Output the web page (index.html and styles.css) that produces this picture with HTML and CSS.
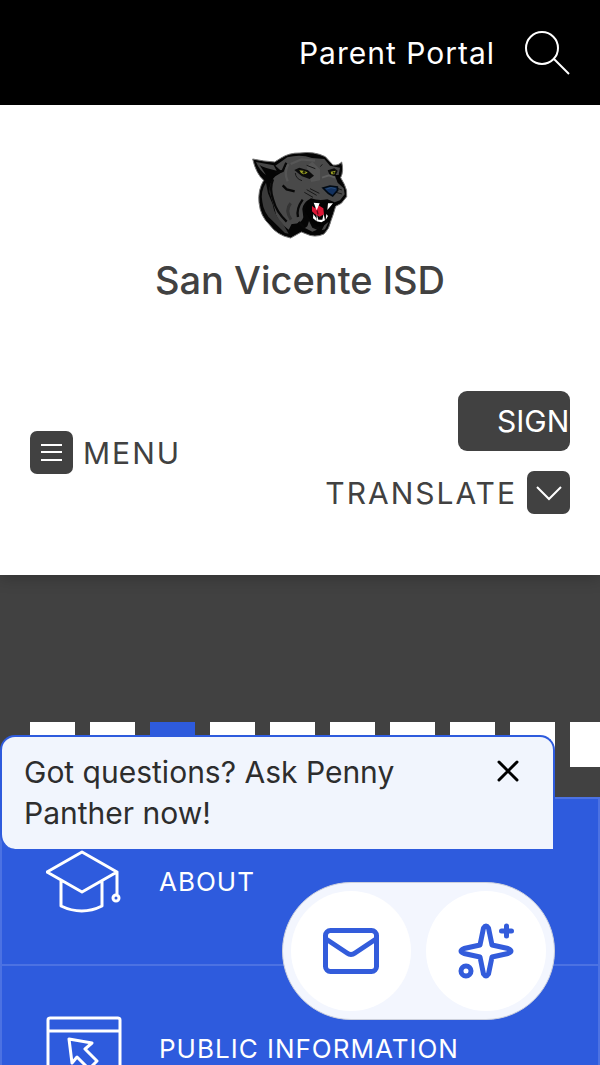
FILE: index.html
```html
<!DOCTYPE html>
<html lang="en">
<head>
<meta charset="utf-8">
<meta name="viewport" content="width=device-width, initial-scale=1">
<title>San Vicente ISD</title>
<link rel="stylesheet" href="styles.css">
</head>
<body>
<div class="page">
  <nav class="topbar" aria-label="Quick links">
    <a class="portal" href="#portal">Parent Portal</a>
    <button class="plain search" type="button" aria-label="Search">
      <svg width="45" height="44" viewBox="0 0 45 44" fill="none" stroke="#fff" stroke-width="2"><circle cx="17" cy="17" r="16"/><path d="m29 28 15 15"/></svg>
    </button>
  </nav>

  <header class="header">
    <a class="brand" href="#home">
      <svg class="logo" viewBox="36 30 288 270" aria-hidden="true">
        <path d="M38 57Q70 64 104 66L123 54Q148 38 180 39Q221 33 256 50L279 75Q296 77 305 66Q312 93 302 113L313 133Q323 152 320 170L304 190 287 199Q280 224 273 242Q268 267 252 282Q224 295 197 281L184 276 152 294Q111 286 89 255Q61 229 57 188Q53 151 71 121Q48 101 38 57Z" fill="#050505" stroke="#777" stroke-width="3"/>
        <path d="M48 66 101 76 110 92 79 84Q65 79 59 75L78 105Q59 92 48 66Z" fill="#464646"/>
        <path d="M106 77 142 52Q182 42 216 54L253 57 270 77 300 83 296 105 284 105 293 128 311 145 314 163 300 181 284 187 262 178Q235 183 213 175Q189 188 187 207L190 232Q185 253 155 252L146 269Q108 243 104 207L89 157Q87 126 106 109L127 96Z" fill="#494949"/>
        <path d="M78 128Q61 153 67 185Q71 219 96 241L135 279 146 281 129 252Q103 226 98 193L84 160Z" fill="#3a3a3a"/>
        <path d="M99 118Q87 146 100 181 109 216 140 245M106 98 128 93 139 68M128 136 140 148 164 154M188 179Q168 207 174 231M176 246 194 264 237 264" fill="none" stroke="#080808" stroke-width="7"/>
        <path d="M152 190Q134 211 153 239" fill="none" stroke="#343434" stroke-width="9"/>
        <path d="M145 72Q131 98 143 124M152 72 184 58 225 62" fill="none" stroke="#565656" stroke-width="7"/>
        <path d="M200 78 217 65 240 88 240 121 214 126 207 109Z" fill="#555"/>
        <path d="M163 90 178 83 204 91 222 107 209 117 186 109Z" fill="#0b0b0b"/>
        <path d="M178 91Q190 91 203 97 199 103 190 103 182 101 178 91Z" fill="#9ba026"/><circle cx="192" cy="97" r="4" fill="#202408"/>
        <path d="M263 91 283 85 293 92 286 108 270 107Z" fill="#0b0b0b"/>
        <path d="M272 95 287 92 283 103 274 103Z" fill="#9ba026"/><circle cx="281" cy="98" r="3" fill="#202408"/>
        <path d="M166 99Q167 116 186 122M200 76 226 86M241 80 247 73M200 149 230 166M193 157 219 172M210 146 238 160M292 145 306 150M288 157 306 162" fill="none" stroke="#181818" stroke-width="3"/>
        <path d="M246 113 267 106 285 113" fill="none" stroke="#606060" stroke-width="6"/>
        <path d="M249 144 270 138 292 141 293 151 278 168 265 160Z" fill="#12315f" stroke="#020a13" stroke-width="5"/>
        <path d="m259 147 14-4 14 3" fill="none" stroke="#365b84" stroke-width="2"/>
        <path d="M203 184Q229 191 252 185L276 187 284 191 269 231 263 251Q244 264 221 252L195 215Z" fill="#030303"/>
        <path d="M216 198 225 205 234 195 250 205 252 223 239 230 225 223 216 214Z" fill="#dd1736"/>
        <path d="M231 211 234 223" fill="none" stroke="#650719" stroke-width="4"/>
        <path d="M221 188 239 190 230 211ZM264 190 279 190 262 210ZM220 222 229 235 229 243 219 235ZM230 223 235 239 247 239 251 222 255 241 244 247 230 244ZM259 222 264 228 257 240Z" fill="#fff"/>
        <path d="M207 243 217 263 231 269 217 275 195 264 202 259ZM266 245 255 268 245 271 253 256Z" fill="#494949"/>
      </svg>
      <span class="brand-name">San Vicente ISD</span>
    </a>
    <div class="controls">
      <button class="plain control" type="button">
        <span class="tile-icon"><svg width="21" height="19" viewBox="0 0 21 19" stroke="#fff" stroke-width="2"><path d="M0 2h21M0 9h21M0 17h21"/></svg></span>
        <span>MENU</span>
      </button>
      <div class="account">
        <button class="signin" type="button">SIGN</button>
        <button class="plain control" type="button">
          <span>TRANSLATE</span>
          <span class="tile-icon"><svg width="26" height="16" viewBox="0 0 26 16" fill="none" stroke="#fff" stroke-width="2"><path d="m1 2 12 12L25 2"/></svg></span>
        </button>
      </div>
    </div>
  </header>

  <main>
    <section class="hero" aria-label="Gallery">
      <div class="slides">
        <button class="slide" type="button" aria-label="Slide 1"></button>
        <button class="slide" type="button" aria-label="Slide 2"></button>
        <button class="slide current" type="button" aria-label="Slide 3"></button>
        <button class="slide" type="button" aria-label="Slide 4"></button>
        <button class="slide" type="button" aria-label="Slide 5"></button>
        <button class="slide" type="button" aria-label="Slide 6"></button>
        <button class="slide" type="button" aria-label="Slide 7"></button>
        <button class="slide" type="button" aria-label="Slide 8"></button>
        <button class="slide" type="button" aria-label="Slide 9"></button>
        <button class="slide" type="button" aria-label="Slide 10"></button>
      </div>
    </section>
    <nav class="links" aria-label="Site sections">
      <a class="link" href="#about">
        <svg width="76" height="76" viewBox="0 0 76 76" fill="none" stroke="#fff" stroke-width="3" stroke-linejoin="round"><path d="M36 8 71 28 36 48 1 28ZM15 37V62Q36 72 56 62V37M71 28V50"/><circle cx="70" cy="54" r="3"/></svg>
        <span>ABOUT</span>
      </a>
      <a class="link" href="#public-information">
        <svg width="76" height="76" viewBox="0 0 76 76" fill="none" stroke="#fff" stroke-width="3" stroke-linejoin="round"><rect x="2" y="7" width="72" height="62" rx="2"/><path d="M2 20h72M23 28 46 32 39 38 51 50 43 58 31 46 26 52Z"/></svg>
        <span>PUBLIC INFORMATION</span>
      </a>
    </nav>
  </main>

  <aside class="prompt" aria-label="Chat invitation">
    <p class="prompt-text">Got questions? Ask Penny Panther now!</p>
    <button class="plain close" type="button" aria-label="Close">
      <svg width="22" height="22" viewBox="0 0 22 22" stroke="#000" stroke-width="3" stroke-linecap="round"><path d="m2 2 18 18M20 2 2 20"/></svg>
    </button>
  </aside>
  <div class="dock">
    <button class="plain round" type="button" aria-label="Send a message">
      <svg width="56" height="46" viewBox="0 0 56 46" fill="none" stroke="#335cdb" stroke-width="5" stroke-linejoin="round"><rect x="2.500" y="2.500" width="51" height="41" rx="5"/><path d="m3 11 21 14q4 3 8 0l21-14"/></svg>
    </button>
    <button class="plain round" type="button" aria-label="Ask the assistant">
      <svg width="56" height="56" viewBox="0 0 56 56" fill="none" stroke="#335cdb" stroke-width="5" stroke-linecap="round" stroke-linejoin="round"><path d="M25.500 5Q28 1 30.500 5L34 22 50 25.500Q56 28 50 30.500L34 34 30.500 51Q28 55 25.500 51L22 34 6 30.500Q0 28 6 25.500L22 22Z"/><path d="M48.500 3v10M43.500 8h10"/><circle cx="8" cy="48" r="5"/></svg>
    </button>
  </div>
</div>
</body>
</html>
```

FILE: styles.css
```css
* { box-sizing: border-box; }
body { margin: 0; font-family: Inter, "Liberation Sans", sans-serif; color: #414141; }
a { color: inherit; text-decoration: none; }
button { font: inherit; color: inherit; cursor: pointer; }
svg { display: block; flex: none; }
.page { position: relative; height: 100vh; overflow: hidden; }
.plain { padding: 0; border: 0; background: none; }

.topbar { display: flex; justify-content: flex-end; align-items: center; gap: 30px; height: 105px; padding: 0 30px; background: #000; color: #fff; }
.portal { font-size: 30px; line-height: 40px; letter-spacing: 1px; }

.header { position: relative; height: 470px; padding: 45px 30px 61px; background: #fff; box-shadow: 0 2px 15px rgba(0, 0, 0, .25); display: flex; flex-direction: column; justify-content: space-between; }
.brand { display: flex; flex-direction: column; align-items: center; gap: 15px; }
.logo { width: 96px; height: 90px; }
.brand-name { font-size: 38px; line-height: 50px; font-weight: 500; }
.controls { display: flex; justify-content: space-between; align-items: center; }
.control { display: flex; align-items: center; gap: 10px; font-size: 30px; line-height: 40px; letter-spacing: 2px; }
.tile-icon { display: grid; place-items: center; width: 43px; height: 43px; border-radius: 7px; background: #414141; }
.account { display: flex; flex-direction: column; align-items: flex-end; gap: 20px; }
.signin { width: 112px; height: 60px; padding: 0 0 0 39px; border: 0; border-radius: 9px; background: #414141; color: #fff; font-size: 30px; line-height: 40px; text-align: left; overflow: hidden; white-space: nowrap; }

.hero { display: flex; align-items: flex-end; height: 222px; padding: 0 0 30px 30px; background: #414141; overflow: hidden; }
.slides { display: flex; gap: 15px; }
.slide { flex: none; width: 45px; height: 45px; padding: 0; border: 0; background: #fff; }
.current { background: #2e5bdd; }

.links { display: grid; border: 2px solid #4c72e2; background: #2e5bdd; color: #fff; }
.link { display: flex; align-items: center; gap: 37px; height: 167px; padding: 0 44px; font-size: 26px; line-height: 36px; letter-spacing: 1px; border-bottom: 2px solid #4c72e2; }

.prompt { position: absolute; left: 0; right: 45px; bottom: 216px; display: flex; align-items: flex-start; justify-content: space-between; padding: 15px 34px 15px 22px; border: 2px solid #2e5bdd; border-bottom: 0; border-radius: 15px 15px 0 15px; background: #f1f5fd; color: #2d2d2d; }
.prompt-text { margin: 0; max-width: 400px; font-size: 30px; line-height: 41px; }
.close { margin-top: 8px; }
.dock { position: absolute; right: 45px; bottom: 45px; display: flex; gap: 15px; padding: 8px; border: 1px solid #ccd0dc; border-radius: 70px; background: #f3f6fe; }
.round { display: grid; place-items: center; width: 120px; height: 120px; border-radius: 50%; background: #fff; }
```
